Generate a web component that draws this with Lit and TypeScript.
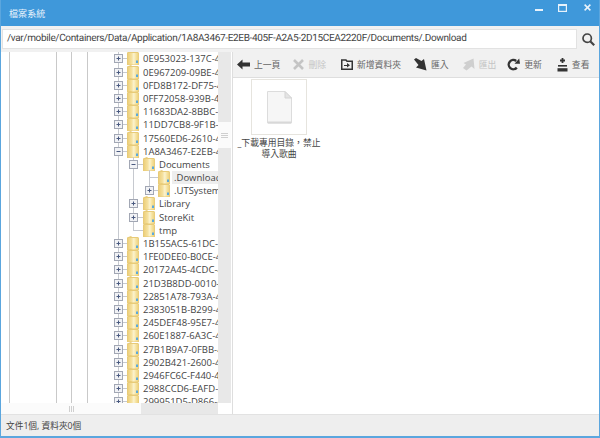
import { LitElement, html, css, svg } from "lit";
import { customElement } from "lit/decorators.js";

type Row = { level: number; label: string; state: "plus" | "minus" | "none"; last?: boolean; selected?: boolean };

const rows: Row[] = [
  { level: 0, label: "0E953023-137C-4D1A", state: "plus" },
  { level: 0, label: "0E967209-09BE-4C2F", state: "plus" },
  { level: 0, label: "0FD8B172-DF75-4A10", state: "plus" },
  { level: 0, label: "0FF72058-939B-40C3", state: "plus" },
  { level: 0, label: "11683DA2-8BBC-4E77", state: "plus" },
  { level: 0, label: "11DD7CB8-9F1B-4A65", state: "plus" },
  { level: 0, label: "17560ED6-2610-4B98", state: "plus" },
  { level: 0, label: "1A8A3467-E2EB-405F", state: "minus" },
  { level: 1, label: "Documents", state: "minus" },
  { level: 2, label: ".Download", state: "none", selected: true },
  { level: 2, label: ".UTSystemConfig", state: "plus", last: true },
  { level: 1, label: "Library", state: "plus" },
  { level: 1, label: "StoreKit", state: "plus" },
  { level: 1, label: "tmp", state: "none", last: true },
  { level: 0, label: "1B155AC5-61DC-4F02", state: "plus" },
  { level: 0, label: "1FE0DEE0-B0CE-4A31", state: "plus" },
  { level: 0, label: "20172A45-4CDC-4B60", state: "plus" },
  { level: 0, label: "21D3B8DD-0010-4E19", state: "plus" },
  { level: 0, label: "22851A78-793A-4C84", state: "plus" },
  { level: 0, label: "2383051B-B299-4D57", state: "plus" },
  { level: 0, label: "245DEF48-95E7-4A26", state: "plus" },
  { level: 0, label: "260E1887-6A3C-4F93", state: "plus" },
  { level: 0, label: "27B1B9A7-0FBB-4C48", state: "plus" },
  { level: 0, label: "2902B421-2600-4A75", state: "plus" },
  { level: 0, label: "2946FC6C-F440-4D12", state: "plus" },
  { level: 0, label: "2988CCD6-EAFD-4B39", state: "plus" },
  { level: 0, label: "299951D5-D866-4E01", state: "plus" },
];

const boxX = [117, 132.5, 148];
const gutterW = [126, 142, 157];
const farGuides = [8, 55, 70, 86];

function gutter(r: Row) {
  const w = gutterW[r.level];
  const cx = Math.floor(boxX[r.level]) + 0.5;
  const parts: unknown[] = [];
  for (const x of farGuides) parts.push(svg`<line x1=${x + 0.5} x2=${x + 0.5} y1="-1" y2="15" stroke="#c9c9c9"/>`);
  for (let l = 0; l <= r.level; l++) {
    const x = Math.floor(boxX[l]) + 0.5;
    const half = l === r.level && r.last;
    parts.push(svg`<line x1=${x} x2=${x} y1="-1" y2=${half ? 7 : 15} stroke="#c6c9cf"/>`);
  }
  parts.push(svg`<line x1=${cx} x2=${w} y1="6.5" y2="6.5" stroke="#c6c9cf"/>`);
  if (r.state !== "none") {
    parts.push(svg`<rect x=${cx - 4} y="2.5" width="8" height="8" fill="#f1f2f5" stroke="#a2a7b4"/>`);
    parts.push(svg`<line x1=${cx - 2} x2=${cx + 2} y1="6.5" y2="6.5" stroke="#4a5a80"/>`);
    if (r.state === "plus") parts.push(svg`<line x1=${cx} x2=${cx} y1="4.5" y2="8.5" stroke="#4a5a80"/>`);
  }
  return html`<svg class="gutter" width=${w} height="14" viewBox="0 0 ${w} 14">${parts}</svg>`;
}

const folder = html`<svg class="folder" width="12" height="14" viewBox="0 0 12 14">
  <defs><linearGradient id="fg" x1="0" x2="1" y1="0" y2="0">
    <stop offset="0" stop-color="#edd07c"/><stop offset=".35" stop-color="#f5e19f"/><stop offset=".55" stop-color="#fbf3cf"/><stop offset=".75" stop-color="#f6e3a0"/><stop offset="1" stop-color="#ecd07e"/>
  </linearGradient></defs>
  <path d="M0 1.5 L4 0 L5 1 L11 1 L12 2 L12 14 L0 14 Z" fill="#e8cb78"/>
  <path d="M1 2 L11.5 2 L11.5 13.5 L1 13.5 Z" fill="url(#fg)"/>
  <rect x="9" y="9.5" width="2" height="2.5" fill="#5aa9dd"/>
</svg>`;

const icons = {
  back: html`<svg width="13" height="11" viewBox="0 0 13 11"><path d="M0 5.5 L5.5 0.5 L5.5 3.5 L13 3.5 L13 7.5 L5.5 7.5 L5.5 10.5 Z" fill="#333"/></svg>`,
  del: html`<svg width="11" height="11" viewBox="0 0 11 11"><path d="M1 1 L10 10 M10 1 L1 10" stroke="#c4c4c4" stroke-width="2.6"/></svg>`,
  newFolder: html`<svg width="12" height="11" viewBox="0 0 12 11"><path d="M.75 1 H5 L6 2.2 H11.25 V10.25 H.75 Z" fill="none" stroke="#333" stroke-width="1.5"/><path d="M3 6 H6 V4 L9 6.3 L6 8.6 V7 H3 Z" fill="#333"/></svg>`,
  imp: html`<svg width="13" height="13" viewBox="0 0 13 13"><path d="M0 1.5 L2 0 L7.5 3 L10 1 L12.5 12.5 L2 9.5 L4.5 7 Z" fill="#333"/></svg>`,
  exp: html`<svg width="12" height="13" viewBox="0 0 12 13"><path d="M0 10 L3 6.5 L0.5 5 L10.5 0.5 L11.5 11 L8.5 8.5 L3.5 12.5 Z" fill="#cfcfcf"/></svg>`,
  refresh: html`<svg width="13" height="13" viewBox="0 0 13 13"><path d="M9.8 9.6 A4.6 4.6 0 1 1 9.2 3" fill="none" stroke="#333" stroke-width="2.4"/><path d="M7.5 5.8 L13 5.8 L12.2 0.6 Z" fill="#333"/></svg>`,
  view: html`<svg width="11" height="14" viewBox="0 0 11 14"><path d="M5.5 0 V5 M3 2.5 H8" stroke="#333" stroke-width="1.8"/><rect x="1" y="7" width="9" height="1.6" fill="#333"/><rect x="0.5" y="10.2" width="10" height="3.3" fill="#333"/></svg>`,
};

const tools = [
  { icon: icons.back, label: "上一頁", off: false, cls: "m13" },
  { icon: icons.del, label: "刪除", off: true, cls: "m15" },
  { icon: icons.newFolder, label: "新增資料夾", off: false, cls: "m13" },
  { icon: icons.imp, label: "匯入", off: false, cls: "m14" },
  { icon: icons.exp, label: "匯出", off: true, cls: "m11" },
  { icon: icons.refresh, label: "更新", off: false, cls: "m15" },
  { icon: icons.view, label: "查看", off: false, cls: "" },
];

@customElement("app-root")
export class AppRoot extends LitElement {
  static styles = css`
    :host {
      display: flex;
      flex-direction: column;
      box-sizing: border-box;
      width: 600px;
      height: 438px;
      border: solid #5ba6de;
      border-width: 0 1px 2px 1px;
      background: #fff;
      font-family: "Open Sans", "Noto Sans CJK TC", sans-serif;
      color: #444;
      overflow: hidden;
    }
    .title {
      height: 26px;
      margin: 0 -1px;
      flex: none;
      background: #3f98da;
      color: #e6f1fa;
      display: flex;
      align-items: center;
      padding: 0 9px;
      font-size: 9px;
      letter-spacing: 0.1px;
    }
    .title-text { flex: 1; padding-top: 1px; }
    .win { display: flex; align-items: flex-start; align-self: flex-start; padding-top: 4px; }
    .win svg { display: block; }
    .win-max { margin: 0 17px 0 15px; }
    .addr {
      height: 26px;
      flex: none;
      background: #f1f1f1;
      display: flex;
      align-items: center;
      padding-left: 1px;
    }
    .input {
      width: 575px;
      height: 20px;
      box-sizing: border-box;
      background: #fff;
      border: 1px solid #e2e2e2;
      font-family: Roboto, sans-serif;
      font-size: 10px;
      letter-spacing: -0.34px;
      text-rendering: geometricPrecision;
      line-height: 18px;
      padding-left: 4px;
      color: #444;
      white-space: nowrap;
      overflow: hidden;
    }
    .search { flex: 1; display: flex; justify-content: center; }
    .body { flex: 1; display: flex; min-height: 0; }
    .left {
      width: 232px;
      flex: none;
      display: grid;
      grid-template-columns: 217px 13px 2px;
      grid-template-rows: 1fr 11px;
      min-height: 0;
    }
    .tree { overflow: hidden; min-height: 0; }
    .row {
      height: 13.2px;
      display: flex;
      align-items: flex-start;
      white-space: nowrap;
      font-size: 9.5px;
      line-height: 13px;
      color: #444;
    }
    .row:first-child { margin-top: 0.4px; }
    .gutter { flex: none; display: block; overflow: visible; }
    .folder { flex: none; display: block; margin-top: -1px; overflow: visible; }
    .label { margin-left: 3px; padding-left: 1px; flex: 1; }
    .label.sel { background: #eeeeee; margin-left: 2px; padding-left: 2px; }
    .vbar { background: #e8e8e8; padding-top: 70px; }
    .vthumb { height: 26px; background: #fbfbfb; display: flex; flex-direction: column; justify-content: center; align-items: center; gap: 1px; }
    .vthumb i { display: block; width: 7px; height: 1px; background: #cfcfcf; }
    .gap { grid-row: 1 / 3; grid-column: 3; background: #fff; border-right: 1px solid #dedede; box-sizing: border-box; }
    .hbar { background: #e8e8e8; display: flex; }
    .hthumb { width: 140px; background: #fbfbfb; display: flex; justify-content: center; align-items: center; gap: 1px; }
    .hthumb i { display: block; width: 1px; height: 6px; background: #cfcfcf; }
    .corner { background: #fff; }
    .right { flex: 1; display: flex; flex-direction: column; min-width: 0; }
    .toolbar {
      height: 26px;
      flex: none;
      box-sizing: border-box;
      background: #f1f1f1;
      border-bottom: 1px solid #dedede;
      display: flex;
      align-items: center;
      padding-left: 4px;
      font-size: 8.8px;
    }
    .tool { display: flex; align-items: center; gap: 4px; color: #666; }
    .tool svg { display: block; }
    .tool.off { color: #c4c4c4; }
    .m11 { margin-right: 11px; }
    .m13 { margin-right: 13px; }
    .m14 { margin-right: 14px; }
    .m15 { margin-right: 15px; }
    .files { flex: 1; padding: 1px 0 0 5px; }
    .file { width: 82px; display: flex; flex-direction: column; align-items: center; font-size: 8.8px; line-height: 11px; color: #444; }
    .thumb {
      width: 56px;
      height: 56px;
      box-sizing: border-box;
      border: 1px solid #e6e4de;
      margin-bottom: 3px;
      display: flex;
      align-items: center;
      justify-content: center;
    }
    .name { text-align: center; white-space: nowrap; }
    .status {
      height: 22px;
      flex: none;
      box-sizing: border-box;
      background: #eeeeee;
      border-top: 1px solid #e2e2e2;
      display: flex;
      align-items: center;
      padding-left: 5px;
      font-size: 8.7px;
      color: #444;
    }
  `;

  render() {
    return html`
      <div class="title">
        <span class="title-text">檔案系統</span>
        <span class="win">
          <svg width="8" height="8" viewBox="0 0 8 8"><rect x="0" y="5" width="8" height="2" fill="#e8f2fb"/></svg>
          <svg class="win-max" width="9" height="8" viewBox="0 0 9 8"><rect x=".6" y=".6" width="7.8" height="6.8" fill="none" stroke="#e8f2fb" stroke-width="1.2"/><rect x="0" y="0" width="9" height="2" fill="#e8f2fb"/></svg>
          <svg width="7" height="7" viewBox="0 0 7 7"><path d="M.6 .6 L6.4 6.4 M6.4 .6 L.6 6.4" stroke="#e8f2fb" stroke-width="1.5"/></svg>
        </span>
      </div>
      <div class="addr">
        <div class="input">/var/mobile/Containers/Data/Application/1A8A3467-E2EB-405F-A2A5-2D15CEA2220F/Documents/.Download</div>
        <div class="search">
          <svg width="13" height="13" viewBox="0 0 13 13"><circle cx="5.2" cy="5.2" r="4.2" fill="none" stroke="#444" stroke-width="1.7"/><path d="M8.2 8.2 L12.2 12.2" stroke="#444" stroke-width="2.2"/></svg>
        </div>
      </div>
      <div class="body">
        <div class="left">
          <div class="tree">
            ${rows.map(
              (r) => html`<div class="row">
                ${gutter(r)}${folder}<span class="label ${r.selected ? "sel" : ""}">${r.label}</span>
              </div>`
            )}
          </div>
          <div class="vbar"><div class="vthumb"><i></i><i></i><i></i></div></div>
          <div class="gap"></div>
          <div class="hbar"><div class="hthumb"><i></i><i></i><i></i></div></div>
          <div class="corner"></div>
        </div>
        <div class="right">
          <div class="toolbar">
            ${tools.map(
              (t) => html`<div class="tool ${t.off ? "off" : ""} ${t.cls}">${t.icon}<span>${t.label}</span></div>`
            )}
          </div>
          <div class="files">
            <div class="file">
              <div class="thumb">
                <svg width="25" height="33" viewBox="0 0 25 33">
                  <path d="M.5 .5 H18 L24.5 7 V32 H.5 Z" fill="#f6f6f6" stroke="#dcdcdc"/>
                  <path d="M18 .5 V7 H24.5 Z" fill="#e4e4e4" stroke="#d4d4d4"/>
                  <rect x="1" y="30.5" width="23" height="2" fill="#d8d8d8"/>
                </svg>
              </div>
              <div class="name">_下載專用目錄，禁止<br />導入歌曲</div>
            </div>
          </div>
        </div>
      </div>
      <div class="status">文件1個, 資料夾0個</div>
    `;
  }
}
